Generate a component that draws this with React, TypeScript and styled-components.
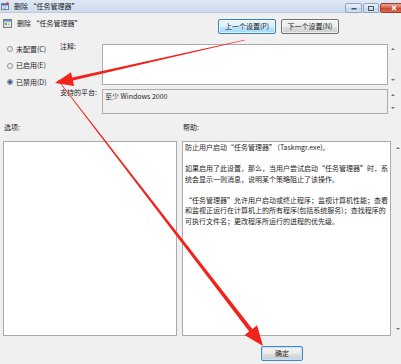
import styled, { createGlobalStyle } from 'styled-components';

const GlobalStyle = createGlobalStyle`
  html, body {
    margin: 0;
    padding: 0;
    background: #f0f0f0;
  }
  * {
    box-sizing: border-box;
  }
`;

const Window = styled.div`
  position: relative;
  width: 401px;
  height: 364px;
  overflow: hidden;
  background: #f0f0f0;
  display: flex;
  flex-direction: column;
  font-family: 'Noto Sans CJK SC', 'Noto Sans', sans-serif;
  font-size: 7px;
  line-height: 7px;
  color: #1e1e1e;
`;

const TitleBar = styled.div`
  flex: none;
  height: 13px;
  display: flex;
  align-items: center;
  gap: 5px;
  padding-left: 1px;
  background: linear-gradient(#dfe9f5, #cfdcee);
  border-bottom: 1px solid #bccbdf;
`;

const TitleText = styled.span`
  color: #1a1a1a;
`;

const WinButtons = styled.div`
  margin-left: auto;
  margin-right: -6px;
  align-self: flex-end;
  display: flex;
  gap: 1px;
  height: 10px;
  margin-bottom: -1px;
`;

const WinButton = styled.div<{ $w: number; $close?: boolean }>`
  width: ${(p) => p.$w}px;
  height: 100%;
  display: flex;
  align-items: center;
  justify-content: center;
  border: 1px solid ${(p) => (p.$close ? '#9b3b33' : '#8fa4c1')};
  border-radius: 2px;
  background: ${(p) =>
    p.$close
      ? 'linear-gradient(#e8a493, #d4604a 50%, #c7432b 51%, #d66f55)'
      : 'linear-gradient(#e9f0f8, #d7e2f0 50%, #c7d5e8 51%, #d6e2f1)'};
`;

const Header = styled.div`
  flex: none;
  height: 31px;
  display: flex;
  align-items: flex-start;
  padding: 6px 0 0 3px;
`;

const HeaderTitle = styled.div`
  display: flex;
  align-items: center;
  gap: 5px;
  height: 9px;
`;

const NavButtons = styled.div`
  margin-left: auto;
  margin-right: 62px;
  display: flex;
  gap: 5px;
`;

const Button = styled.button<{ $hot?: boolean; $default?: boolean }>`
  font: inherit;
  color: #1a1a1a;
  padding: 0;
  height: 15px;
  width: 58px;
  border-radius: 2px;
  border: 1px solid ${(p) => (p.$hot ? '#3c7fb1' : p.$default ? '#4a86c2' : '#707070')};
  background: ${(p) =>
    p.$hot
      ? 'linear-gradient(#eaf6fd, #d9f0fc 50%, #bee6fd 51%, #a7d9f5)'
      : 'linear-gradient(#f2f2f2, #ebebeb 50%, #dddddd 51%, #cfcfcf)'};
  box-shadow: ${(p) => (p.$default ? 'inset 0 0 0 1px #bfe3f9' : 'inset 0 0 0 1px rgba(255,255,255,0.6)')};
`;

const TopSection = styled.div`
  flex: none;
  height: 73px;
  display: flex;
`;

const RadioGroup = styled.div`
  width: 60px;
  padding: 0 0 0 7px;
  display: flex;
  flex-direction: column;
  gap: 6.5px;
`;

const RadioRow = styled.label`
  height: 10px;
  display: flex;
  align-items: center;
  gap: 3px;
`;

const RadioDot = styled.span<{ $checked?: boolean }>`
  width: 6px;
  height: 6px;
  border-radius: 50%;
  border: 1px solid #8b8d90;
  background: ${(p) =>
    p.$checked
      ? 'radial-gradient(circle, #2f4f7a 0 1.4px, #6a8bb4 1.6px 2px, #f4f4f4 2.2px)'
      : 'radial-gradient(circle, #e6e6e6, #fdfdfd)'};
`;

const FieldGrid = styled.div`
  display: grid;
  grid-template-columns: 42px 286px 10px;
  grid-template-rows: 41px 25px;
  row-gap: 4px;
`;

const FieldLabel = styled.span<{ $shift?: number }>`
  margin-top: ${(p) => p.$shift ?? 0}px;
`;

const Box = styled.div<{ $readonly?: boolean }>`
  border: 1px solid #a9abaf;
  background: ${(p) => (p.$readonly ? '#f0f0f0' : '#ffffff')};
  padding: 3px 2px;
`;

const ScrollCol = styled.div<{ $pad: number }>`
  display: flex;
  flex-direction: column;
  justify-content: space-between;
  align-items: center;
  padding: ${(p) => p.$pad}px 0;
`;

const ScrollArrow = styled.span<{ $down?: boolean }>`
  width: 0;
  height: 0;
  border-left: 2px solid transparent;
  border-right: 2px solid transparent;
  ${(p) => (p.$down ? 'border-top: 2px solid #6f6f6f;' : 'border-bottom: 2px solid #6f6f6f;')}
`;

const PaneLabels = styled.div`
  flex: none;
  height: 24px;
  display: flex;
  padding: 7px 0 0 4px;
`;

const PaneLabel = styled.span<{ $w?: number }>`
  width: ${(p) => (p.$w ? `${p.$w}px` : 'auto')};
`;

const Panes = styled.div`
  flex: none;
  height: 195px;
  display: flex;
  padding-left: 3px;
  gap: 5px;
`;

const OptionsPane = styled.div`
  width: 174px;
  border: 1px solid #a9abaf;
  background: #ffffff;
`;

const HelpPane = styled.div`
  width: 209px;
  border: 1px solid #a9abaf;
  background: #ffffff;
  padding: 0 2px;
  line-height: 10.5px;
  white-space: nowrap;
  overflow: hidden;
`;

const HelpPara = styled.p`
  margin: 0 0 10.5px;
`;

const Footer = styled.div`
  flex: 1;
  padding: 10px 0 0 261px;
`;

const OkButton = styled(Button)`
  width: 42px;
`;

const Overlay = styled.svg`
  position: absolute;
  inset: 0;
  pointer-events: none;
`;

const helpParagraphs = [
  ['防止用户启动“任务管理器” (Taskmgr.exe)。'],
  [
    '如果启用了此设置，那么，当用户尝试启动“任务管理器”时，系',
    '统会显示一则消息，说明某个策略阻止了该操作。',
  ],
  [
    '“任务管理器”允许用户启动或终止程序；监视计算机性能；查看',
    '和监视正运行在计算机上的所有程序(包括系统服务)；查找程序的',
    '可执行文件名；更改程序所运行的进程的优先级。',
  ],
];

const radios = [
  { label: '未配置(C)', checked: false },
  { label: '已启用(E)', checked: false },
  { label: '已禁用(D)', checked: true },
];

const AppIcon = () => (
  <svg width="8" height="8" viewBox="0 0 8 8">
    <rect x="0.5" y="1.5" width="7" height="6" fill="#e8eef6" stroke="#6d84a6" />
    <rect x="1" y="2" width="6" height="1.5" fill="#3f78c6" />
    <path d="M2 5h4M2 6.3h3" stroke="#8aa0bf" strokeWidth="0.7" />
    <circle cx="6.4" cy="1.6" r="1.4" fill="#d9443a" />
  </svg>
);

const PolicyIcon = () => (
  <svg width="9" height="9" viewBox="0 0 9 9">
    <rect x="0.5" y="0.5" width="8" height="8" fill="#f6f6f6" stroke="#7d7d7d" />
    <rect x="1" y="1" width="7" height="1.6" fill="#5d8fce" />
    <rect x="1.6" y="3.6" width="2.4" height="2.4" fill="#6bb24b" />
    <path d="M4.8 4h2.4M4.8 5.4h2.4M1.6 7h5.6" stroke="#9a9a9a" strokeWidth="0.6" />
  </svg>
);

export default function App() {
  return (
    <>
      <GlobalStyle />
      <Window>
        <TitleBar>
          <AppIcon />
          <TitleText>删除 “任务管理器”</TitleText>
          <WinButtons>
            <WinButton $w={17}>
              <svg width="6" height="4" viewBox="0 0 6 4">
                <rect x="0.5" y="2" width="5" height="1.5" fill="#4a5568" />
              </svg>
            </WinButton>
            <WinButton $w={16}>
              <svg width="6" height="5" viewBox="0 0 6 5">
                <rect x="0.5" y="0.5" width="5" height="4" fill="none" stroke="#4a5568" />
              </svg>
            </WinButton>
            <WinButton $w={27} $close>
              <svg width="6" height="6" viewBox="0 0 6 6">
                <path d="M1 1l4 4M5 1l-4 4" stroke="#ffffff" strokeWidth="1.4" />
              </svg>
            </WinButton>
          </WinButtons>
        </TitleBar>

        <Header>
          <HeaderTitle>
            <PolicyIcon />
            <span>删除 “任务管理器”</span>
          </HeaderTitle>
          <NavButtons>
            <Button $hot>上一个设置(P)</Button>
            <Button>下一个设置(N)</Button>
          </NavButtons>
        </Header>

        <TopSection>
          <RadioGroup>
            {radios.map((r) => (
              <RadioRow key={r.label}>
                <RadioDot $checked={r.checked} />
                {r.label}
              </RadioRow>
            ))}
          </RadioGroup>
          <FieldGrid>
            <FieldLabel $shift={-1}>注释:</FieldLabel>
            <Box />
            <ScrollCol $pad={4}>
              <ScrollArrow />
              <ScrollArrow $down />
            </ScrollCol>
            <FieldLabel $shift={0}>支持的平台:</FieldLabel>
            <Box $readonly>至少 Windows 2000</Box>
            <ScrollCol $pad={5}>
              <ScrollArrow />
              <ScrollArrow $down />
            </ScrollCol>
          </FieldGrid>
        </TopSection>

        <PaneLabels>
          <PaneLabel $w={179}>选项:</PaneLabel>
          <PaneLabel>帮助:</PaneLabel>
        </PaneLabels>

        <Panes>
          <OptionsPane />
          <HelpPane>
            {helpParagraphs.map((para, i) => (
              <HelpPara key={i}>
                {para.map((line, j) => (
                  <span key={j}>
                    {line}
                    {j < para.length - 1 && <br />}
                  </span>
                ))}
              </HelpPara>
            ))}
          </HelpPane>
          <ScrollCol $pad={6}>
            <ScrollArrow />
            <ScrollArrow $down />
          </ScrollCol>
        </Panes>

        <Footer>
          <OkButton $default>确定</OkButton>
        </Footer>

        <Overlay width="401" height="364" viewBox="0 0 401 364">
          <polygon
            fill="#f2231d"
            points="55,83 74.1,85.9 72.9,80.6 245.1,40.3 244.9,39.7 72.2,77.5 71,72.2"
          />
          <polygon
            fill="#f2231d"
            points="263,346 257.1,325.3 252.4,328.9 58.2,79.8 57.8,80.2 249.2,331.4 244.5,335"
          />
        </Overlay>
      </Window>
    </>
  );
}
